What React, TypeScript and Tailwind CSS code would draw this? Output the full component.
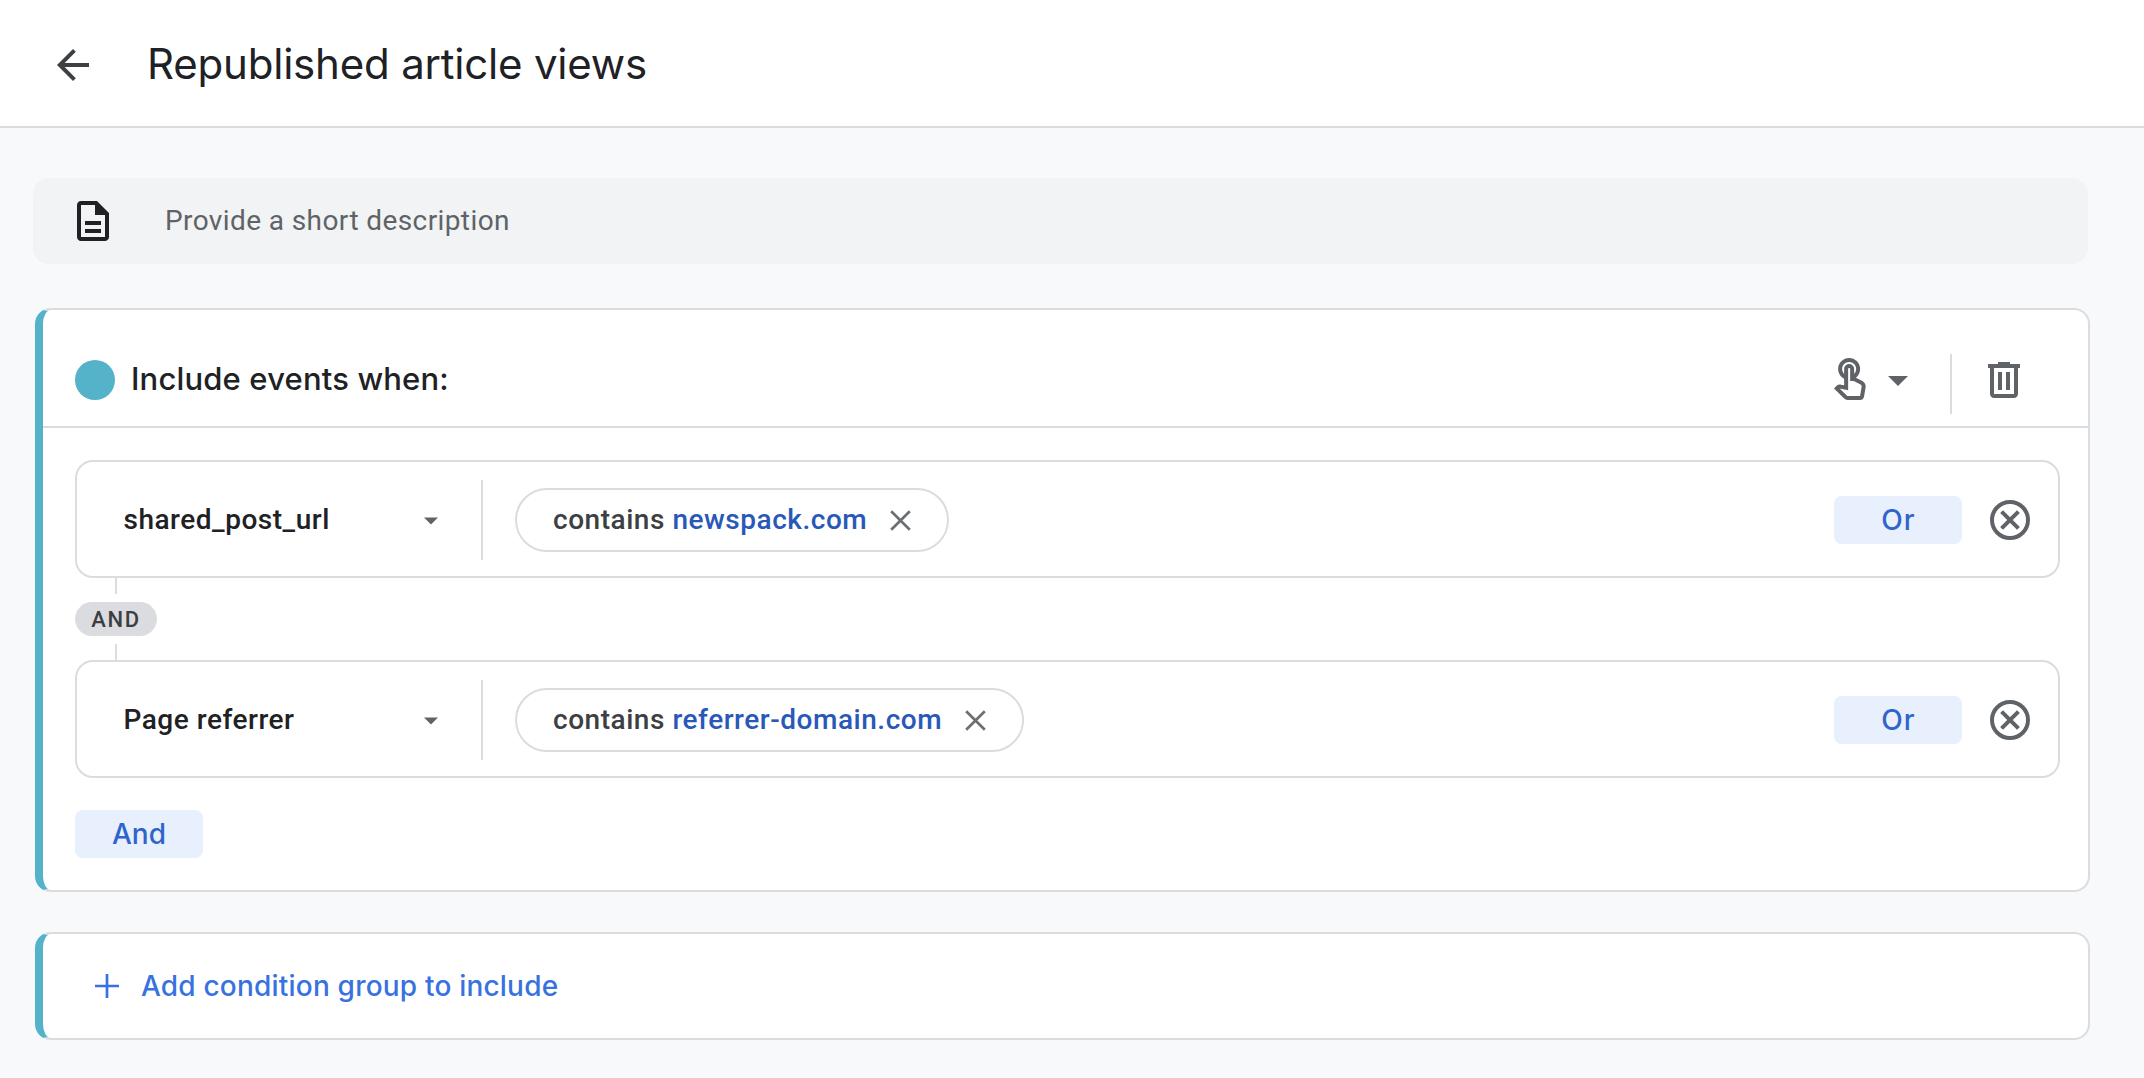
const conditions = [
  { field: "shared_post_url", value: "newspack.com" },
  { field: "Page referrer", value: "referrer-domain.com" },
];

function Icon({ d, className }: { d: string; className: string }) {
  return (
    <svg viewBox="0 0 24 24" fill="currentColor" className={`size-12 shrink-0 ${className}`}>
      <path d={d} />
    </svg>
  );
}

function Condition({ field, value }: { field: string; value: string }) {
  return (
    <div className="flex h-[118px] items-center rounded-[18px] border-2 border-[#dbdce0] pt-0.5">
      <div className="ml-[46.5px] w-[300.5px] font-medium tracking-[0.52px] text-[#202124]">{field}</div>
      <svg viewBox="0 0 14 8" className="mt-0.5 h-2 w-3.5 text-[#5f6368]">
        <path d="M0 0.5h14l-7 7z" fill="currentColor" />
      </svg>
      <div className="ml-[43px] h-20 w-0.5 bg-[#dbdce0]" />
      <div className="ml-8 flex h-16 items-center rounded-full border-2 border-[#dbdce0] pr-[36px] pl-[36px]">
        <div className="pb-px font-medium tracking-[0.53px] text-[#3c4043]">
          contains <span className="text-[#2959b8]">{value}</span>
        </div>
        <svg viewBox="0 0 21 21" className="ml-[23px] size-[21px] text-[#6b6e72]">
          <path d="M1.2 1.2l18.6 18.6M19.8 1.2L1.2 19.8" stroke="currentColor" strokeWidth="2.7" fill="none" />
        </svg>
      </div>
      <button className="ml-auto h-12 w-32 rounded-lg bg-[#e8effd] pl-px font-[Inter,sans-serif] font-medium tracking-[1px] text-[#2f64cb]">
        Or
      </button>
      <svg viewBox="0 0 24 24" className="mr-6 ml-6 size-12 text-[#5f6368]" fill="none" stroke="currentColor" strokeWidth="2">
        <circle cx="12" cy="12" r="9" />
        <path d="M7.8 7.8l8.4 8.4M16.2 7.8l-8.4 8.4" />
      </svg>
    </div>
  );
}

export default function App() {
  return (
    <div className="h-[1078px] w-[2144px] overflow-hidden bg-[#f8f9fb] font-[Roboto,sans-serif] text-[28px] leading-none">
      <header className="flex h-32 items-center border-b-2 border-[#dbdce0] bg-white pl-[49px]">
        <Icon className="mt-1 text-[#3c4043]" d="M20 11H7.83l5.59-5.59L12 4l-8 8 8 8 1.41-1.41L7.83 13H20v-2z" />
        <h1 className="mt-px ml-[50px] font-[Inter,sans-serif] text-[42px] tracking-[-0.2px] text-[#202124]">
          Republished article views
        </h1>
      </header>

      <main className="flex flex-col pt-[50px]">
        <div className="ml-[33px] flex h-[86px] w-[2055px] items-center rounded-2xl bg-[#f1f3f4] pl-9">
          <Icon
            className="text-[#202124]"
            d="M8 16h8v2H8zm0-4h8v2H8zm6-10H6c-1.1 0-2 .9-2 2v16c0 1.1.89 2 1.99 2H18c1.1 0 2-.9 2-2V8l-6-6zm4 18H6V4h7v5h5v11z"
          />
          <span className="ml-12 tracking-[0.4px] text-[#5f6368]">Provide a short description</span>
        </div>

        <section className="mt-11 ml-[35px] h-[584px] w-[2055px] rounded-2xl border-2 border-l-8 border-[#dbdce0] border-l-[#54b2c9] bg-white">
          <div className="flex h-[118px] items-center border-b-2 border-[#dbdce0] pt-6 pr-[60px] pl-8">
            <div className="size-10 rounded-full bg-[#54b2c9]" />
            <h2 className="ml-4 pb-[3px] font-[Inter,sans-serif] text-[31px] font-medium tracking-[0.16px] text-[#202124]">
              Include events when:
            </h2>
            <Icon
              className="ml-auto text-[#5f6368]"
              d="M18.19 12.44l-3.24-1.62c1.29-1 2.12-2.56 2.12-4.32 0-3.03-2.47-5.5-5.5-5.5s-5.5 2.47-5.5 5.5c0 2.13 1.22 3.98 3 4.89v3.26c-2.15-.46-2.02-.44-2.26-.44-.53 0-1.03.21-1.41.59L4 16.22l5.09 5.09c.43.44 1.03.69 1.65.69h6.3c.98 0 1.81-.7 1.97-1.67l.8-4.71c.22-1.3-.43-2.58-1.62-3.18zm-.35 2.85l-.8 4.71h-6.3c-.09 0-.17-.04-.24-.1l-3.68-3.68 4.25.89V6.5c0-.28.22-.5.5-.5s.5.22.5.5v6h1.76l3.46 1.73c.4.2.62.63.55 1.06zM8.07 6.5c0-1.93 1.57-3.5 3.5-3.5s3.5 1.57 3.5 3.5c0 .95-.38 1.81-1 2.44V6.5c0-1.38-1.12-2.5-2.5-2.5s-2.5 1.12-2.5 2.5v2.44c-.62-.63-1-1.49-1-2.44z"
            />
            <Icon className="text-[#5f6368]" d="M7 10l5 5 5-5z" />
            <div className="mt-2 ml-7 h-[60px] w-0.5 bg-[#dbdce0]" />
            <Icon
              className="ml-7 text-[#5f6368]"
              d="M9 3v1H4v2h1v13c0 1.1.9 2 2 2h10c1.1 0 2-.9 2-2V6h1V4h-5V3H9zM7 6h10v13H7V6zm2 2v9h2V8H9zm4 0v9h2V8h-2z"
            />
          </div>

          <div className="flex flex-col pt-8 pr-7 pl-8">
            <Condition {...conditions[0]} />
            <div className="flex h-[82px] flex-col justify-between">
              <div className="ml-10 h-4 w-0.5 bg-[#dbdce0]" />
              <div className="flex h-[34px] w-[82px] items-center justify-center rounded-full bg-[#dbdce0] pt-px text-[22px] font-medium tracking-[1.7px] text-[#3c4043]">
                AND
              </div>
              <div className="ml-10 h-4 w-0.5 bg-[#dbdce0]" />
            </div>
            <Condition {...conditions[1]} />
            <button className="mt-8 h-12 w-32 rounded-lg bg-[#e8effd] font-[Inter,sans-serif] font-medium text-[#2f64cb]">
              And
            </button>
          </div>
        </section>

        <section className="mt-10 ml-[35px] flex h-[108px] w-[2055px] items-center rounded-2xl border-2 border-l-8 border-[#dbdce0] border-l-[#54b2c9] bg-white pl-[52px] text-[#3871e0]">
          <svg viewBox="0 0 24 24" className="size-6">
            <path d="M12 0v24M0 12h24" stroke="currentColor" strokeWidth="2.7" fill="none" />
          </svg>
          <span className="ml-[22px] pb-px font-[Inter,sans-serif] font-medium tracking-[0.2px]">
            Add condition group to include
          </span>
        </section>
      </main>
    </div>
  );
}
